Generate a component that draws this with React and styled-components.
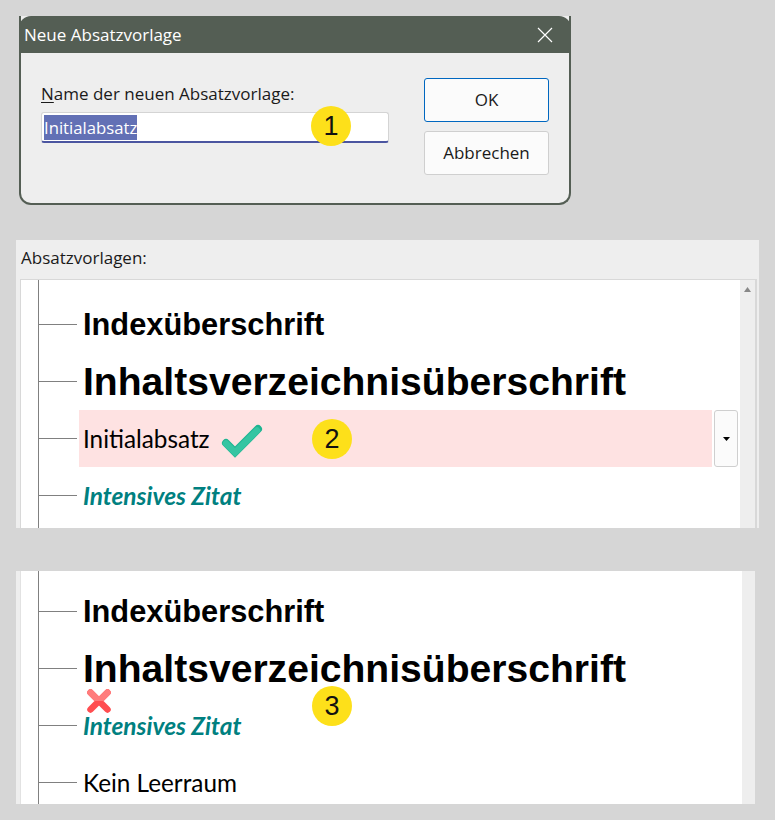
import React from "react";
import styled, { createGlobalStyle } from "styled-components";

const GlobalStyle = createGlobalStyle`
  html, body { margin: 0; padding: 0; background: #d6d6d6; }
  body { font-family: "Open Sans", "Noto Sans", sans-serif; color: #111; }
`;

const UI_FONT = `"Open Sans", "Noto Sans", sans-serif`;

const Page = styled.div`
  width: 775px;
  height: 820px;
  padding-top: 16px;
  box-sizing: border-box;
  overflow: hidden;
  display: flex;
  flex-direction: column;
`;

const Dialog = styled.section`
  position: relative;
  box-sizing: border-box;
  width: 552px;
  height: 189px;
  margin-left: 19px;
  background: #eeeeee;
  border: 2px solid #545e54;
  border-top: none;
  border-radius: 0 0 12px 12px;
`;

const TitleBar = styled.header`
  height: 37px;
  margin: 0 -2px;
  padding: 0 18px 0 5px;
  background: #545e54;
  border-radius: 12px 12px 0 0;
  color: #fff;
  display: flex;
  align-items: center;
  justify-content: space-between;
  font: 17px ${UI_FONT};
`;

const DialogBody = styled.div`
  display: flex;
  justify-content: space-between;
  padding: 25px 20px 0 20px;
`;

const Field = styled.div`
  width: 348px;
  padding-top: 6px;
`;

const FieldLabel = styled.label`
  display: block;
  font: 17px/20px ${UI_FONT};
  color: #1a1a1a;
  margin-bottom: 8px;
  u { text-underline-offset: 2px; }
`;

const Input = styled.div`
  box-sizing: border-box;
  height: 31px;
  padding: 2px 2px 0;
  background: #fff;
  border: 1px solid #d4d4d4;
  border-bottom: 2px solid #4b55a0;
  border-radius: 3px;
`;

const Selected = styled.span`
  display: inline-block;
  height: 25px;
  background: #6270b5;
  color: #fff;
  font: 16.7px/26px ${UI_FONT};
`;

const Buttons = styled.div`
  display: flex;
  flex-direction: column;
  gap: 9px;
`;

const Button = styled.button`
  box-sizing: border-box;
  width: 125px;
  height: 44px;
  padding: 0 0 1px;
  background: #fbfbfb;
  border: 1px solid ${p => (p.$primary ? "#0067c0" : "#cfcfcf")};
  border-radius: 3px;
  color: #1a1a1a;
  font: 17px ${UI_FONT};
`;

const Badge = styled.span`
  position: absolute;
  left: ${p => p.$x}px;
  top: ${p => p.$y}px;
  width: 40px;
  height: 40px;
  border-radius: 50%;
  background: #fde01a;
  color: #111;
  display: flex;
  align-items: center;
  justify-content: center;
  font: 27px "Liberation Sans", Arial, sans-serif;
`;

const Panel = styled.section`
  position: relative;
  box-sizing: border-box;
  width: 743px;
  height: 288px;
  margin: 35px 0 0 16px;
  background: #eeeeee;
  display: flex;
  flex-direction: column;
`;

const PanelLabel = styled.div`
  height: 39px;
  box-sizing: border-box;
  padding: 7px 0 0 5px;
  font: 17px/22px ${UI_FONT};
  color: #1a1a1a;
`;

const ListFrame = styled.div`
  flex: 1;
  min-height: 0;
  margin: 0 2px 0 4px;
  display: flex;
  background: #fff;
  border: 1px solid #d8d8d8;
  border-bottom: none;
`;

const Tree = styled.div`
  position: relative;
  flex: 1;
  min-width: 0;
  overflow: hidden;
  margin-left: 17px;
  padding-top: 16px;
  border-left: 1px solid #808080;
`;

const Row = styled.div`
  height: 57px;
  display: flex;
  align-items: center;
`;

const Connector = styled.i`
  flex: none;
  width: 38px;
  height: 1px;
  background: #808080;
`;

const Entry = styled.div`
  flex: 1;
  align-self: stretch;
  display: flex;
  align-items: center;
  margin-left: 2px;
  padding-left: 4px;
  background: ${p => (p.$active ? "#fee2e2" : "transparent")};
`;

const IndexTitle = styled.span`
  font: bold 30.8px "Liberation Sans", Arial, sans-serif;
  color: #000;
`;

const ContentsTitle = styled.span`
  font: bold 39.1px "Liberation Sans", Arial, sans-serif;
  color: #000;
  white-space: nowrap;
`;

const PlainTitle = styled.span`
  font: 24.3px Lato, sans-serif;
  color: #000;
`;

const QuoteTitle = styled.span`
  font: italic bold 24.45px Lato, sans-serif;
  color: #008080;
`;

const DropButton = styled.div`
  flex: none;
  box-sizing: border-box;
  width: 24px;
  align-self: stretch;
  margin: 0 2px;
  background: #fbfbfb;
  border: 1px solid #cfcfcf;
  border-radius: 3px;
  display: flex;
  align-items: center;
  justify-content: center;
`;

const Scrollbar = styled.div`
  flex: none;
  width: 15px;
  background: #eeeeee;
  border-right: 1px solid #d8d8d8;
  display: flex;
  justify-content: center;
  padding-top: 7px;
  box-sizing: content-box;
`;

const SecondPanel = styled.section`
  position: relative;
  box-sizing: border-box;
  width: 739px;
  height: 233px;
  margin: 43px 0 0 16px;
  padding: 0 13px 0 4px;
  background: #eeeeee;
  display: flex;
`;

const SecondList = styled.div`
  flex: 1;
  display: flex;
  background: #fff;
  border-left: 1px solid #e2e2e2;
`;

const SecondTree = styled(Tree)`
  padding-top: 12px;
`;

const Tick = styled.svg`
  flex: none;
  margin-left: 11px;
  margin-top: 3px;
`;

const Cross = styled.svg`
  position: absolute;
  left: 48px;
  top: 118px;
`;

function Check() {
  return (
    <Tick width="42" height="36" viewBox="0 0 42 36">
      <path d="M5 21 L14 30 L37 7" fill="none" stroke="#1db491" strokeWidth="8" strokeLinecap="round" />
      <path d="M5 21.5 L14 30.5 L36 8.5" fill="none" stroke="#35c5a2" strokeWidth="6.5" strokeLinecap="round" />
    </Tick>
  );
}

function CrossMark() {
  return (
    <Cross width="24" height="24" viewBox="0 0 24 24">
      <defs>
        <clipPath id="upperHalf">
          <rect x="0" y="0" width="24" height="12" />
        </clipPath>
      </defs>
      <path d="M3.5 3.5 L20.5 20.5 M20.5 3.5 L3.5 20.5" stroke="#ff4d50" strokeWidth="6.5" strokeLinecap="round" />
      <path d="M3.5 3.5 L20.5 20.5 M20.5 3.5 L3.5 20.5" stroke="#ff7c7c" strokeWidth="6.5" strokeLinecap="round" clipPath="url(#upperHalf)" />
    </Cross>
  );
}

export default function App() {
  return (
    <>
      <GlobalStyle />
      <Page>
        <Dialog>
          <TitleBar>
            <span>Neue Absatzvorlage</span>
            <svg width="16" height="16" viewBox="0 0 16 16">
              <path d="M1 1 L15 15 M15 1 L1 15" stroke="#fff" strokeWidth="1.2" />
            </svg>
          </TitleBar>
          <DialogBody>
            <Field>
              <FieldLabel><u>N</u>ame der neuen Absatzvorlage:</FieldLabel>
              <Input><Selected>Initialabsatz</Selected></Input>
            </Field>
            <Buttons>
              <Button $primary>OK</Button>
              <Button>Abbrechen</Button>
            </Buttons>
          </DialogBody>
          <Badge $x={290} $y={90}>1</Badge>
        </Dialog>

        <Panel>
          <PanelLabel>Absatzvorlagen:</PanelLabel>
          <ListFrame>
            <Tree>
              <Row><Connector /><Entry><IndexTitle>Indexüberschrift</IndexTitle></Entry></Row>
              <Row><Connector /><Entry><ContentsTitle>Inhaltsverzeichnisüberschrift</ContentsTitle></Entry></Row>
              <Row>
                <Connector />
                <Entry $active><PlainTitle>Initialabsatz</PlainTitle><Check /></Entry>
                <DropButton>
                  <svg width="7" height="4" viewBox="0 0 7 4"><path d="M0 0 H7 L3.5 4 Z" fill="#000" /></svg>
                </DropButton>
              </Row>
              <Row><Connector /><Entry><QuoteTitle>Intensives Zitat</QuoteTitle></Entry></Row>
            </Tree>
            <Scrollbar>
              <svg width="7" height="5" viewBox="0 0 7 5"><path d="M3.5 0 L7 5 H0 Z" fill="#888" /></svg>
            </Scrollbar>
          </ListFrame>
          <Badge $x={296} $y={179}>2</Badge>
        </Panel>

        <SecondPanel>
          <SecondList>
            <SecondTree>
              <Row><Connector /><Entry><IndexTitle>Indexüberschrift</IndexTitle></Entry></Row>
              <Row><Connector /><Entry><ContentsTitle>Inhaltsverzeichnisüberschrift</ContentsTitle></Entry></Row>
              <Row><Connector /><Entry><QuoteTitle>Intensives Zitat</QuoteTitle></Entry></Row>
              <Row><Connector /><Entry><PlainTitle>Kein Leerraum</PlainTitle></Entry></Row>
              <CrossMark />
            </SecondTree>
          </SecondList>
          <Badge $x={296} $y={115}>3</Badge>
        </SecondPanel>
      </Page>
    </>
  );
}
